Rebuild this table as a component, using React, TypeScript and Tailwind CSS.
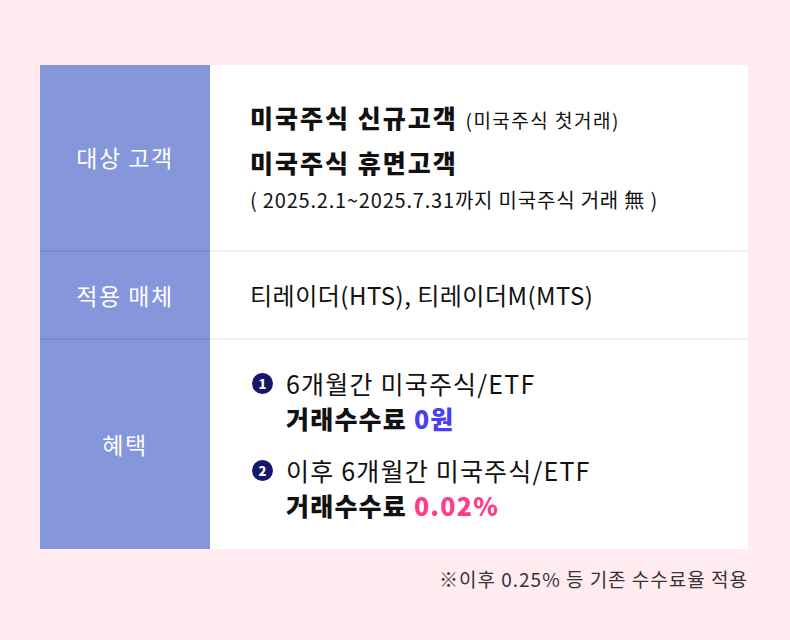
import React from "react";

const font = { fontFamily: '"Noto Sans CJK KR", "Noto Sans", sans-serif' };

function Badge({ n }: { n: string }) {
  return (
    <span className="flex h-[21px] w-[21px] shrink-0 items-center justify-center rounded-full bg-[#16166b] text-[13px] font-black leading-none text-white">
      {n}
    </span>
  );
}

export default function App() {
  return (
    <div className="h-[640px] w-[790px] bg-[#ffebf0] pt-[65px] pl-[40px]" style={font}>
      <div className="grid w-[708px] grid-cols-[170px_1fr] bg-white">
        {/* Row 1 */}
        <div className="flex h-[187px] items-center justify-center border-b-2 border-[#00000010] bg-[#8696da] text-[23px] tracking-[1.5px] text-white">
          대상 고객
        </div>
        <div className="flex h-[187px] flex-col justify-center border-b-2 border-[#f2f2f2] pl-[40px] text-[#111]">
          <div className="text-[25px] font-black leading-[32px] tracking-[2px]">
            미국주식 신규고객{" "}
            <span className="text-[19px] font-normal tracking-[1.5px]">(미국주식 첫거래)</span>
          </div>
          <div className="mt-[10px] text-[25px] font-black leading-[32px] tracking-[2px]">미국주식 휴면고객</div>
          <div className="mt-[8px] text-[20px] leading-[28px] tracking-[0.8px]">( 2025.2.1~2025.7.31까지 미국주식 거래 無 )</div>
        </div>
        {/* Row 2 */}
        <div className="flex h-[88px] items-center justify-center border-b-2 border-[#00000010] bg-[#8696da] text-[23px] tracking-[1.5px] text-white">
          적용 매체
        </div>
        <div className="flex h-[88px] items-center border-b-2 border-[#f2f2f2] pl-[40px] text-[24px] tracking-[0.5px] text-[#111]">
          티레이더(HTS), 티레이더M(MTS)
        </div>
        {/* Row 3 */}
        <div className="flex h-[209px] items-center justify-center bg-[#8696da] text-[23px] tracking-[1.5px] text-white">
          혜택
        </div>
        <div className="flex h-[209px] flex-col justify-center gap-[17px] pl-[42px] text-[#111]">
          <div className="flex gap-[13px]">
            <div className="pt-[7px]"><Badge n="1" /></div>
            <div>
              <div className="text-[25px] leading-[35px] tracking-[1.2px]">6개월간 미국주식/ETF</div>
              <div className="text-[25px] font-black leading-[35px] tracking-[1.2px]">
                거래수수료 <span className="text-[#4b3cf5]">0원</span>
              </div>
            </div>
          </div>
          <div className="flex gap-[13px]">
            <div className="pt-[7px]"><Badge n="2" /></div>
            <div>
              <div className="text-[25px] leading-[35px] tracking-[1.2px]">이후 6개월간 미국주식/ETF</div>
              <div className="text-[25px] font-black leading-[35px] tracking-[1.2px]">
                거래수수료 <span className="text-[#ff3c8c]">0.02%</span>
              </div>
            </div>
          </div>
        </div>
      </div>
      <div className="mt-[16px] w-[708px] text-right text-[19px] tracking-[1px] text-[#333]">※이후 0.25% 등 기존 수수료율 적용</div>
    </div>
  );
}
